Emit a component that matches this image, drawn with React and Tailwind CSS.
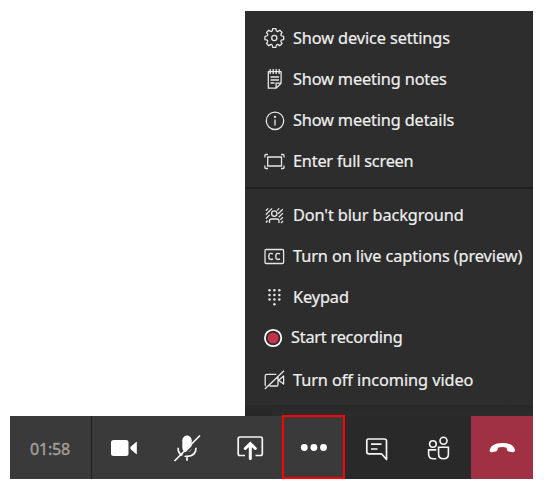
import React from "react";

const gearPoints = Array.from({ length: 8 }, (_, i) => {
  const at = (deg, r) => {
    const a = ((i * 45 + deg) * Math.PI) / 180;
    return `${(12.3 + r * Math.cos(a)).toFixed(2)} ${(12 + r * Math.sin(a)).toFixed(2)}`;
  };
  return `${i === 0 ? "M" : "L"}${at(-10, 9.5)} L${at(10, 9.5)} Q${at(13, 7.4)} ${at(22.5, 7.1)} Q${at(32, 7.4)} ${at(35, 9.5)}`;
}).join(" ") + "Z";

function MenuIcon({ children }) {
  return (
    <svg width="24" height="25" viewBox="0 0 24 25" fill="none" stroke="#e6e6e6" strokeWidth="1.3" strokeLinejoin="round" className="shrink-0">
      {children}
    </svg>
  );
}

const icons = {
  gear: (
    <MenuIcon>
      <path d={gearPoints} />
      <circle cx="12.3" cy="12" r="2.6" />
    </MenuIcon>
  ),
  notes: (
    <MenuIcon>
      <path d="M6.3 4.6h12.8v11.6l-5 5H6.3z M14.1 21.2v-5h5 M8.2 2v5 M11.2 2v5 M14.2 2v5 M17.2 2v5 M8.5 10h8.5 M8.5 13h8.5 M8.5 16h4" />
    </MenuIcon>
  ),
  info: (
    <MenuIcon>
      <circle cx="13" cy="12.8" r="8.7" />
      <path d="M13 11.5v6" />
      <circle cx="13" cy="8.9" r="0.5" fill="#e6e6e6" />
    </MenuIcon>
  ),
  full: (
    <MenuIcon>
      <rect x="5.7" y="8" width="13.8" height="9" />
      <path d="M2.9 8.5V6.5q0-1 1-1h2 M19 5.5h2q1 0 1 1V8.500 M22 16.500v2q0 1-1 1h-2 M6 19.500H3.900q-1 0-1-1V16.500" />
    </MenuIcon>
  ),
  blur: (
    <MenuIcon>
      <circle cx="12.3" cy="10.6" r="2.7" />
      <path d="M7.5 20v-2q0-2 2-2h5.500q2 0 2 2v2 M3.8 7.800l2.400-2.400 M3.8 11.700l6.300-6.300 M3.8 15.700l3.800-3.800 M3.8 19.5l2-2 M15.2 7.4l2-2 M16.200 10.800l4.600-4.600 M16.700 14.300l4.200-4.200 M18.400 16.700l2.500-2.500 M19 20l2-2" />
    </MenuIcon>
  ),
  cc: (
    <MenuIcon>
      <rect x="3" y="5.5" width="18.6" height="14" rx="1.2" />
      <path d="M11 9.9q-4.2-1.7-4.2 2.5t4.2 2.6 M18 9.9q-4.2-1.7-4.2 2.5t4.2 2.6" strokeWidth="1.4" />
    </MenuIcon>
  ),
  keypad: (
    <MenuIcon>
      <g fill="#e6e6e6" stroke="none">
        {[5.2, 9.900, 14.600].map((y) => [7.5, 12.4, 17.3].map((x) => <circle key={`${x}-${y}`} cx={x} cy={y} r="1.25" />))}
        <circle cx="12.4" cy="19.3" r="1.25" />
      </g>
    </MenuIcon>
  ),
  record: (
    <MenuIcon>
      <circle cx="11.1" cy="12" r="8.2" stroke="#fff" strokeWidth="1.8" />
      <circle cx="11.1" cy="12" r="5.5" fill="#c4314b" stroke="none" />
    </MenuIcon>
  ),
  videoOff: (
    <MenuIcon>
      <path d="M3.8 19q-.6-.5-.6-1.3V9q0-1.600 1.600-1.600h9.500 M16 9.500v8.200q0 1.300-1.300 1.300H7.500 M21.600 9l-4.300 3.700v1L21.600 17z M2.900 22L22 3.700" />
    </MenuIcon>
  ),
};

const viewItems = [
  ["gear", "Show device settings", "tracking-[-0.1px]"],
  ["notes", "Show meeting notes", "tracking-[-0.14px]"],
  ["info", "Show meeting details", "tracking-[-0.14px]"],
  ["full", "Enter full screen", "tracking-[-0.2px]"],
];

const callItems = [
  ["blur", "Don't blur background", "tracking-[-0.1px]"],
  ["cc", "Turn on live captions (preview)", "tracking-[-0.08px]"],
  ["keypad", "Keypad", "tracking-[-0.1px]"],
  ["record", "Start recording", "tracking-[-0.22px]"],
  ["videoOff", "Turn off incoming video", "tracking-[-0.06px]"],
];

function MenuRow({ item: [icon, label, tracking] }) {
  return (
    <li className={`flex h-[41px] items-center pl-[17px] ${icon === "record" ? "gap-[5px]" : "gap-[7px]"}`}>
      {icons[icon]}
      <span
        className={`whitespace-nowrap text-[16.3px] leading-6 text-[#f0f0f0] [-webkit-text-stroke:0.2px_#f0f0f0] ${icon === "record" ? "pb-[4px]" : icon === "videoOff" ? "pb-0" : "pb-[2px]"} ${tracking}`}
      >
        {label}
      </span>
    </li>
  );
}

function BarIcon({ width, children }) {
  return (
    <button className={`flex h-full items-center justify-center ${width}`}>
      <svg width="32" height="32" viewBox="0 0 32 32" fill="none" stroke="#f5f5f5" strokeWidth="1.7" strokeLinejoin="round">
        {children}
      </svg>
    </button>
  );
}

export default function App() {
  return (
    <div className="h-[491px] w-[544px] overflow-hidden bg-white pl-[10px] pt-[11px] font-['Noto_Sans','Open_Sans',sans-serif]">
      <div className="w-[523px]">
        <div className="ml-[235px] h-[405px] w-[288px] bg-[#2b2b2b]">
          <div className="h-[394px] bg-[#2d2d2d]">
            <ul className="h-[176px] pt-[7px]">
              {viewItems.map((item) => <MenuRow key={item[0]} item={item} />)}
            </ul>
            <div className="h-[2px] bg-[#1f1f1f]" />
            <ul className="pt-[6px]">
              {callItems.map((item) => <MenuRow key={item[0]} item={item} />)}
            </ul>
          </div>
          <div className="flex h-[11px]">
            <div className="w-[27px] bg-linear-to-b from-[#292929] to-[#252525]" />
            <div className="flex-1 bg-linear-to-b from-[#272727] to-[#2d2d2d]" />
          </div>
        </div>
        <div className="flex h-[63px] bg-[#3a3a3a]">
          <div className="flex w-[81px] items-center justify-center pr-px pt-[3px] text-[16px] tracking-[-0.15px] text-[#a19f9d] [-webkit-text-stroke:0.4px_#a19f9d]">01:58</div>
          <div className="w-px bg-[#1f1f1f]" />
          <BarIcon width="w-[64px]">
            <rect x="3" y="8" width="17.5" height="16" rx="2.5" fill="#fff" stroke="none" />
            <path d="M28.8 9.500v13l-5.900-5.100q-1.400-1.400 0-2.800z" fill="#fff" stroke="none" />
          </BarIcon>
          <BarIcon width="w-[62px]">
            <rect x="11.3" y="3.5" width="9.4" height="17" rx="4.7" fill="#fff" stroke="none" />
            <path d="M7 15.8q0 8.5 9 8.5t9-8.5 M16 24.3v4.5" />
            <path d="M5.3 31L30.3 6" stroke="#3a3a3a" strokeWidth="2" />
            <path d="M3.5 29L29 3.5" />
          </BarIcon>
          <BarIcon width="w-[64px]">
            <path d="M11 23.5H6q-1.800 0-1.800-1.800V6.800Q4.200 5 6 5h20.500q1.800 0 1.800 1.800v14.900q0 1.800-1.800 1.800h-5" />
            <path d="M16.300 26.500V13 M11.300 16.500l5-5 5 5" strokeWidth="3" strokeLinecap="round" strokeLinejoin="miter" stroke="#fff" />
          </BarIcon>
          <div className="-mt-px h-[64px] w-[63px] border-2 border-[#ff0000]">
            <BarIcon width="w-full">
              <g fill="#fff" stroke="none">
                <circle cx="6.300" cy="16.500" r="3.400" />
                <circle cx="15.900" cy="16.500" r="3.400" />
                <circle cx="25.500" cy="16.500" r="3.400" />
              </g>
            </BarIcon>
          </div>
          <div className="flex w-[126px] bg-[#292929]">
            <BarIcon width="w-[64px]">
              <path d="M7.300 7H23.500q2 0 2 2v18.500l-5-5.700H7.800q-2 0-2-2V8.500Q5.800 7 7.300 7z M10 12.200h10.500 M10 17h6.500" />
            </BarIcon>
            <BarIcon width="w-[62px]">
              <g strokeWidth="1.600">
                <circle cx="8.900" cy="12" r="3.300" />
                <circle cx="19.500" cy="8.700" r="3.500" />
                <path d="M14.600 15.200H24.400v7q0 4.500-4.900 4.500t-4.900-4.500z M12.300 17.900H4.600v4q0 4.800 5 4.800h2.700" strokeLinejoin="miter" />
              </g>
            </BarIcon>
          </div>
          <div className="w-[62px] bg-[#a03044]">
            <BarIcon width="w-full">
              <path d="M3.500 18.600Q4.500 11 16.200 11t12.800 7.600q-.2 2-2.200 1.700l-4.100-.8q-1.600-.4-1.800-2l-.3-1.800q-4.300-1.200-8.700 0l-.3 1.800q-.2 1.600-1.800 2l-4.100.8q-2 .3-2-1.700z" fill="#fff" stroke="none" />
            </BarIcon>
          </div>
        </div>
      </div>
    </div>
  );
}
